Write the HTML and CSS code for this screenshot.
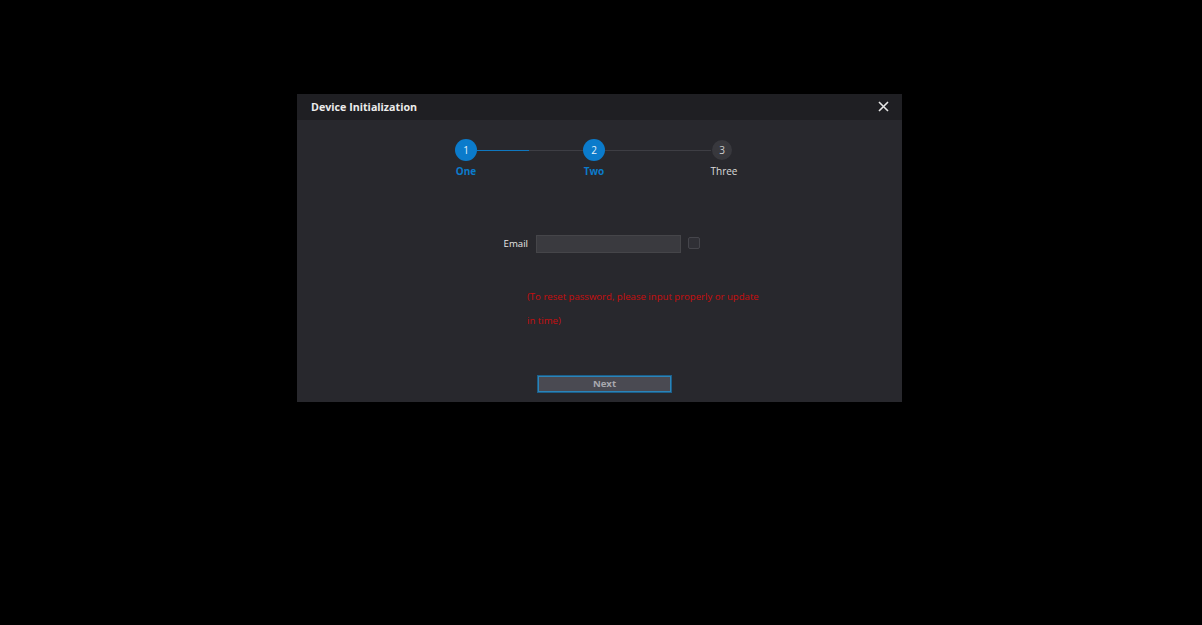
FILE: index.html
```html
<!DOCTYPE html>
<html>
<head>
<meta charset="utf-8">
<link rel="stylesheet" href="styles.css">
</head>
<body>
<div class="dialog">
  <div class="dialog-header">
    <span class="dialog-title">Device Initialization</span>
    <svg class="close" width="11" height="11" viewBox="0 0 11 11"><path d="M1 1L10 10M10 1L1 10" stroke="#e6e6e6" stroke-width="1.6" fill="none"/></svg>
  </div>
  <div class="dialog-body">
    <div class="steps">
      <div class="step done">
        <div class="circle">1</div>
        <div class="label">One</div>
      </div>
      <div class="connector half"></div>
      <div class="step done">
        <div class="circle">2</div>
        <div class="label">Two</div>
      </div>
      <div class="connector"></div>
      <div class="step todo">
        <div class="circle">3</div>
        <div class="label">Three</div>
      </div>
    </div>
    <div class="form-row">
      <label class="field-label">Email</label>
      <div class="input"></div>
      <div class="checkbox"></div>
    </div>
    <p class="warning">(To reset password, please input properly or update in time)</p>
    <div class="btn">Next</div>
  </div>
</div>
</body>
</html>
```
FILE: styles.css
```css
html, body {
  margin: 0;
  padding: 0;
  background: #000;
  font-family: "Open Sans", "Noto Sans", sans-serif;
}
body {
  width: 1202px;
  height: 625px;
  overflow: hidden;
}
.dialog {
  margin: 94px 0 0 297px;
  width: 605px;
  height: 308px;
  background: #28282d;
  display: flex;
  flex-direction: column;
}
.dialog-header {
  height: 25px;
  padding: 0 13px 1px 14px;
  background: #1f1f23;
  display: flex;
  align-items: center;
  justify-content: space-between;
}
.dialog-title {
  color: #ececec;
  font-size: 10.7px;
  font-weight: 700;
}
.close {
  display: block;
}
.dialog-body {
  flex: 1;
  padding-top: 19px;
}
.steps {
  display: flex;
  margin-left: 149px;
}
.step {
  width: 40px;
  display: flex;
  flex-direction: column;
  align-items: center;
}
.circle {
  position: relative;
  z-index: 1;
  width: 22px;
  height: 22px;
  border-radius: 50%;
  background: #0b7bcb;
  color: #e8f2fb;
  font-size: 10px;
  line-height: 22px;
  text-align: center;
}
.step.todo .circle {
  width: 20px;
  height: 20px;
  line-height: 20px;
  margin-top: 1px;
  margin-bottom: 1px;
  background: #38383d;
  color: #cfcfcf;
}
.label {
  margin-top: 3px;
  font-size: 10px;
  line-height: 14px;
  font-weight: 700;
  color: #0b7bcb;
}
.step.todo .label {
  font-weight: 400;
  color: #dcdcdc;
  margin-left: 4px;
}
.connector {
  width: 106px;
  height: 1px;
  margin: 11px -9px 0;
  background: #3e3e44;
  flex: none;
}
.connector.half {
  background: linear-gradient(to right, #0f78c0 0, #0f78c0 52px, #3e3e44 52px);
}
.form-row {
  margin: 57px 0 0 163px;
  display: flex;
  align-items: center;
  height: 18px;
}
.field-label {
  width: 68px;
  text-align: right;
  color: #e6e6e6;
  font-size: 9.6px;
  margin-top: -2px;
}
.input {
  margin-left: 8px;
  width: 143px;
  height: 16px;
  background: #3a3a3f;
  border: 1px solid #454549;
}
.checkbox {
  margin-left: 7px;
  margin-top: -2px;
  width: 10px;
  height: 10px;
  border: 1px solid #45454b;
  border-radius: 2px;
  background: #2f2f35;
}
.warning {
  margin: 32px 0 0 230px;
  width: 240px;
  color: #c80e0e;
  font-size: 9.6px;
  line-height: 24px;
}
.btn {
  margin: 42px 0 0 240px;
  width: 133px;
  height: 16px;
  background: #4a4a52;
  border: 1px solid #1b5f8a;
  box-shadow: inset 0 0 0 1px #2c84b8;
  color: #a8a8ae;
  font-size: 9.6px;
  font-weight: 700;
  line-height: 16px;
  text-align: center;
}
```
